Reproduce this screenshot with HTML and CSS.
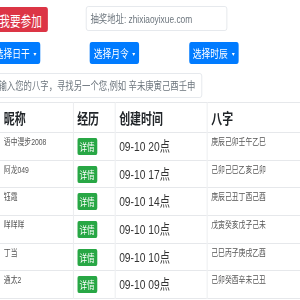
FILE: index.html
```html
<!DOCTYPE html>
<html lang="zh-CN">
<head>
    <meta charset="UTF-8">
    <meta name="viewport" content="width=device-width, initial-scale=1.0">
    <title>寻找另一个您</title>
    <link rel="stylesheet" href="styles.css">
</head>
<body>
    <div class="page">
        <div class="top-row">
            <button class="btn btn-red">我要参加</button>
            <input class="field field-addr" type="text" placeholder="抽奖地址: zhixiaoyixue.com">
        </div>

        <div class="pick-row">
            <div class="pick-col"><button class="btn btn-blue dropdown">选择日干</button></div>
            <div class="pick-col"><button class="btn btn-blue dropdown">选择月令</button></div>
            <div class="pick-col"><button class="btn btn-blue dropdown">选择时辰</button></div>
        </div>

        <input class="field field-search" type="text" placeholder="输入您的八字，寻找另一个您,例如 辛未庚寅己酉壬申">

        <!-- 参加列表 -->
        <table class="list">
            <thead>
                <tr>
                    <th class="col-name">昵称</th>
                    <th class="col-info">经历</th>
                    <th class="col-time">创建时间</th>
                    <th class="col-bazi">八字</th>
                </tr>
            </thead>
            <tbody>
                <tr>
                    <td class="name">语中漫步2008</td>
                    <td><button class="btn btn-green">详情</button></td>
                    <td class="time">09-10 20点</td>
                    <td class="bazi">庚辰己卯壬午乙巳</td>
                </tr>
                <tr>
                    <td class="name">阿龙049</td>
                    <td><button class="btn btn-green">详情</button></td>
                    <td class="time">09-10 17点</td>
                    <td class="bazi">己卯己巳乙亥己卯</td>
                </tr>
                <tr>
                    <td class="name">钰霞</td>
                    <td><button class="btn btn-green">详情</button></td>
                    <td class="time">09-10 14点</td>
                    <td class="bazi">庚辰己丑丁酉己酉</td>
                </tr>
                <tr>
                    <td class="name">咩咩咩</td>
                    <td><button class="btn btn-green">详情</button></td>
                    <td class="time">09-10 10点</td>
                    <td class="bazi">戊寅癸亥戊子己未</td>
                </tr>
                <tr>
                    <td class="name">丁当</td>
                    <td><button class="btn btn-green">详情</button></td>
                    <td class="time">09-10 10点</td>
                    <td class="bazi">己巳丙子庚戌乙酉</td>
                </tr>
                <tr>
                    <td class="name">通太2</td>
                    <td><button class="btn btn-green">详情</button></td>
                    <td class="time">09-10 09点</td>
                    <td class="bazi">己卯癸酉辛未己丑</td>
                </tr>
            </tbody>
        </table>
    </div>
</body>
</html>
```

FILE: styles.css
```css
* {
    margin: 0;
    padding: 0;
    box-sizing: border-box;
}
html, body {
    overflow: hidden;
}
body {
    font-family: "Liberation Sans", "Noto Sans CJK SC", sans-serif;
    color: #212529;
    background-color: #fff;
}

.page {
    width: 420px;
    transform: scaleX(0.76);
    transform-origin: 0 0;
}

.btn {
    border: none;
    color: #fff;
    font-family: inherit;
    border-radius: 3px;
    cursor: pointer;
}
.btn-red {
    background-color: #dc3545;
    font-size: 14px;
    height: 25px;
    padding: 0 8px;
    margin-top: 1px;
}
.btn-blue {
    background-color: #007bff;
    font-size: 11.5px;
    height: 22px;
    padding: 0 5px;
}
.dropdown::after {
    content: "";
    display: inline-block;
    vertical-align: middle;
    margin-left: 5px;
    border-top: 3.5px solid #fff;
    border-left: 2.8px solid transparent;
    border-right: 2.8px solid transparent;
}
.btn-green {
    background-color: #28a745;
    font-size: 10px;
    height: 17px;
    padding: 0 3px;
    border-radius: 2px;
}

.field {
    height: 25px;
    border: 1px solid #e3e6ea;
    border-radius: 3px;
    font-family: inherit;
    font-size: 11px;
    padding: 0 5px;
    color: #495057;
    background-color: #fff;
}
.field::placeholder {
    color: #6c757d;
}

.top-row {
    display: flex;
    align-items: flex-start;
    padding-top: 6px;
    margin-left: -9px;
}
.field-addr {
    margin-left: 50px;
    width: 186px;
}

.pick-row {
    display: grid;
    grid-template-columns: repeat(3, 130.3px);
    margin-top: 10px;
    margin-left: -12px;
}

.field-search {
    display: block;
    margin-top: 9px;
    margin-left: -8px;
    width: 274px;
}

/* table */
.list {
    margin-top: 4px;
    width: 420px;
    border-collapse: collapse;
    table-layout: fixed;
    border-bottom: 1px solid #e6e8eb;
}
.col-name { width: 96px; }
.col-info { width: 55.3px; }
.col-time { width: 121.1px; }
.list th,
.list td {
    text-align: left;
    vertical-align: top;
    border-top: 1px solid #e6e8eb;
    padding: 0 5px;
}
.list th + th,
.list td + td {
    border-left: 1px solid #e6e8eb;
}
.list th {
    font-size: 14.4px;
    font-weight: bold;
    line-height: 17px;
    height: 30px;
    padding-top: 8px;
    color: #212529;
}
.list td {
    height: 27.7px;
    padding-top: 4px;
}
.list .name,
.list .bazi {
    font-size: 9px;
    line-height: 13px;
    color: #555;
    padding-top: 3px;
}
.list .time {
    font-size: 13.5px;
    line-height: 16px;
    color: #333;
    padding-top: 6px;
}
```
